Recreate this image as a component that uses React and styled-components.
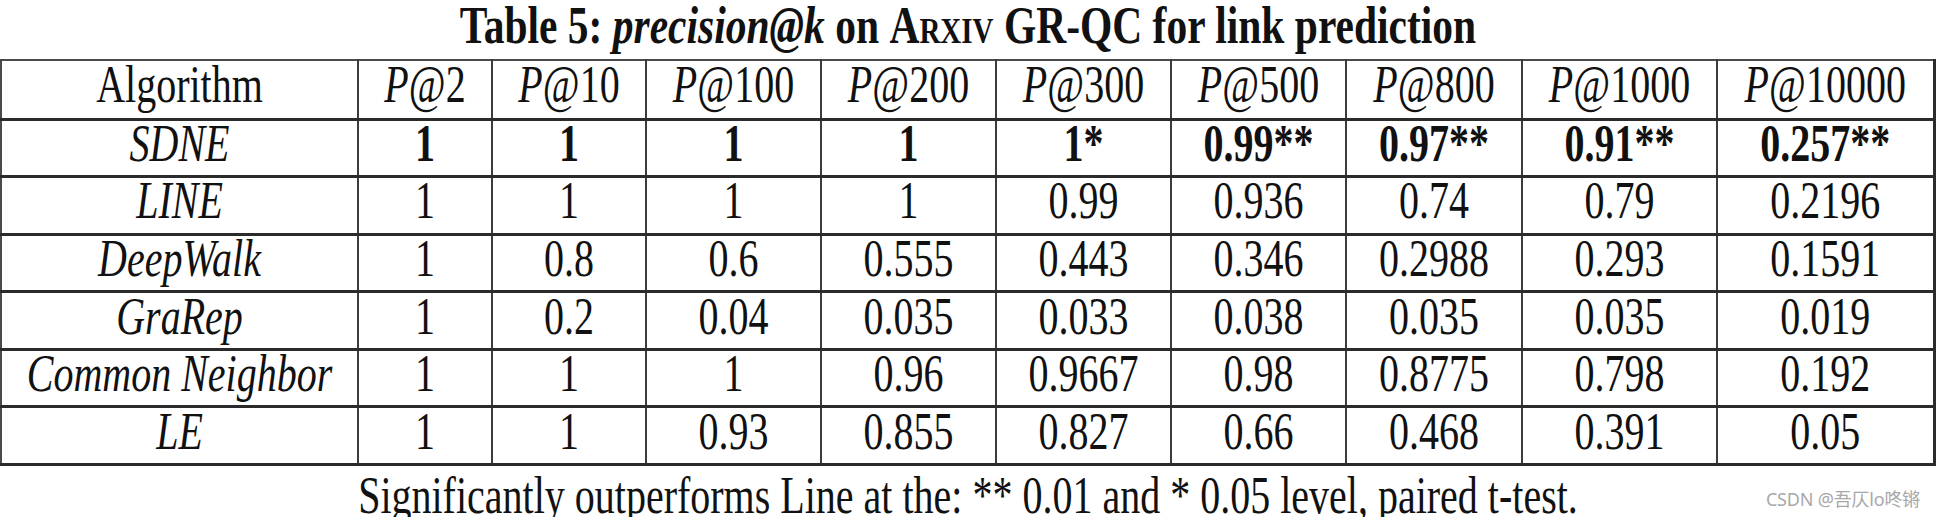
import styled, { createGlobalStyle } from "styled-components";

const GlobalStyle = createGlobalStyle`
  html, body {
    margin: 0;
    padding: 0;
    background: #ffffff;
  }
  body {
    font-family: "Liberation Serif", "Times New Roman", serif;
    color: #111111;
  }
`;

const columns = [
  { label: "Algorithm", width: 357, plain: true },
  { label: "2", width: 134 },
  { label: "10", width: 154 },
  { label: "100", width: 175 },
  { label: "200", width: 175 },
  { label: "300", width: 175 },
  { label: "500", width: 175 },
  { label: "800", width: 176 },
  { label: "1000", width: 195 },
  { label: "10000", width: 217 },
];

const rows = [
  { name: "SDNE", bold: true, values: ["1", "1", "1", "1", "1*", "0.99**", "0.97**", "0.91**", "0.257**"] },
  { name: "LINE", values: ["1", "1", "1", "1", "0.99", "0.936", "0.74", "0.79", "0.2196"] },
  { name: "DeepWalk", values: ["1", "0.8", "0.6", "0.555", "0.443", "0.346", "0.2988", "0.293", "0.1591"] },
  { name: "GraRep", values: ["1", "0.2", "0.04", "0.035", "0.033", "0.038", "0.035", "0.035", "0.019"] },
  { name: "Common Neighbor", values: ["1", "1", "1", "0.96", "0.9667", "0.98", "0.8775", "0.798", "0.192"] },
  { name: "LE", values: ["1", "1", "0.93", "0.855", "0.827", "0.66", "0.468", "0.391", "0.05"] },
];

export default function App() {
  return (
    <>
      <GlobalStyle />
      <Page>
        <Title>
          <Stretch $y={1.26}>
            Table 5: <em>precision@k</em> on <SmallCaps>Arxiv</SmallCaps> GR-QC for link prediction
          </Stretch>
        </Title>

        <Table>
          <colgroup>
            {columns.map((c) => (
              <col key={c.label} style={{ width: c.width }} />
            ))}
          </colgroup>
          <thead>
            <HeadRow>
              {columns.map((c) => (
                <Cell key={c.label}>
                  <Stretch>
                    {c.plain ? (
                      c.label
                    ) : (
                      <>
                        <i>P</i>@{c.label}
                      </>
                    )}
                  </Stretch>
                </Cell>
              ))}
            </HeadRow>
          </thead>
          <tbody>
            {rows.map((r) => (
              <BodyRow key={r.name}>
                <Cell $italic>
                  <Stretch>{r.name}</Stretch>
                </Cell>
                {r.values.map((v, i) => (
                  <Cell key={i} $bold={r.bold}>
                    <Stretch>{v}</Stretch>
                  </Cell>
                ))}
              </BodyRow>
            ))}
          </tbody>
        </Table>

        <Footnote>
          <Stretch>
            Significantly outperforms Line at the: ** 0.01 and * 0.05 level, paired t-test.
          </Stretch>
        </Footnote>

        <Watermark>CSDN @吾仄lo咚锵</Watermark>
      </Page>
    </>
  );
}

const Page = styled.div`
  position: relative;
  width: 1936px;
  height: 517px;
  overflow: hidden;
`;

const Stretch = styled.span`
  display: inline-block;
  line-height: 1;
  white-space: nowrap;
  transform: scaleY(${(p) => p.$y || 1.3});
  transform-origin: center;
`;

const Title = styled.div`
  height: 59px;
  display: flex;
  align-items: center;
  justify-content: center;
  font-size: 41.5px;
  font-weight: 700;
  line-height: 1;
  padding-bottom: 6px;
  box-sizing: border-box;

  em {
    font-style: italic;
  }
`;

const SmallCaps = styled.span`
  font-variant: small-caps;
`;

const Table = styled.table`
  border-collapse: collapse;
  table-layout: fixed;
  width: 1933px;
  border-top: 2px solid #4a4a4a;
  border-left: 2px solid #4a4a4a;
  border-right: 3px solid #2b2b2b;
  border-bottom: 3px solid #2b2b2b;
`;

const HeadRow = styled.tr`
  height: 59px;
  border-bottom: 3px solid #2b2b2b;
`;

const BodyRow = styled.tr`
  height: 57.6px;
  border-bottom: 3px solid #2b2b2b;
`;

const Cell = styled.td`
  padding: 0 0 8px 0;
  text-align: center;
  vertical-align: middle;
  font-size: 40px;
  line-height: 1;
  font-weight: ${(p) => (p.$bold ? 700 : 400)};
  font-style: ${(p) => (p.$italic ? "italic" : "normal")};
  border-right: 2px solid #3c3c3c;
`;

const Footnote = styled.div`
  text-align: center;
  font-size: 40px;
  line-height: 1;
  margin-top: 10px;
`;

const Watermark = styled.div`
  position: absolute;
  right: 16px;
  bottom: 6px;
  font-family: "Noto Sans", "Noto Sans CJK SC", sans-serif;
  font-size: 18px;
  color: #a8a8a8;
  letter-spacing: -0.2px;
`;
